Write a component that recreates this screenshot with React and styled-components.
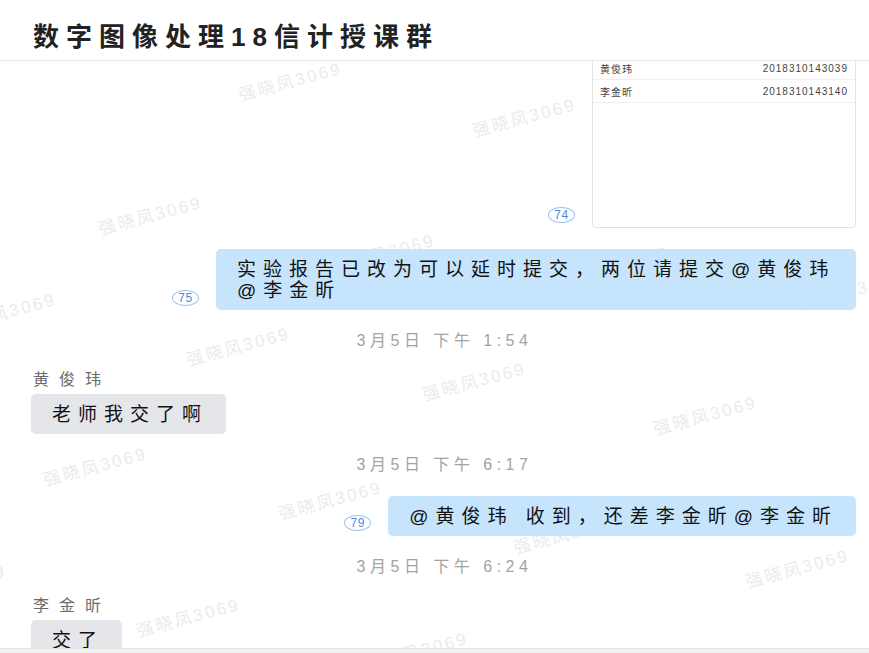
import React from "react";
import styled, { createGlobalStyle } from "styled-components";

const GlobalStyle = createGlobalStyle`
  html, body, #root {
    margin: 0;
    padding: 0;
    height: 100%;
  }
  body {
    background: #fff;
    font-family: "Liberation Sans", "Noto Sans CJK SC", sans-serif;
  }
`;

const Page = styled.div`
  height: 100vh;
  display: flex;
  flex-direction: column;
  overflow: hidden;
`;

/* Header */
const Header = styled.header`
  height: 61px;
  flex-shrink: 0;
  display: flex;
  align-items: center;
  padding: 8px 0 0 33px;
  box-sizing: border-box;
  border-bottom: 1px solid #e6e6e6;
  background: #fff;
  position: relative;
  z-index: 3;
`;

const Title = styled.h1`
  margin: 0;
  font-size: 26px;
  font-weight: 700;
  letter-spacing: 7px;
  color: #222;
`;

/* Chat area */
const ChatArea = styled.main`
  flex: 1;
  position: relative;
  overflow: hidden;
`;

const Watermark = styled.span`
  position: absolute;
  transform: translate(-50%, -50%) rotate(-15deg);
  font-size: 17px;
  letter-spacing: 2.5px;
  color: #ebebeb;
  white-space: nowrap;
  pointer-events: none;
  z-index: 0;
`;

const MessageList = styled.div`
  position: relative;
  z-index: 1;
  margin-top: -5px;
  padding: 0 13px 0 31px;
  display: flex;
  flex-direction: column;
  gap: 21px;
`;

const OutRow = styled.div`
  display: flex;
  justify-content: flex-end;
  align-items: flex-end;
  gap: 17px;
`;

const ReadBadge = styled.span`
  width: 25px;
  height: 14px;
  margin-bottom: ${(p) => p.$lift || 4}px;
  border: 1.5px solid #9dc0ec;
  border-radius: 50%;
  display: flex;
  align-items: center;
  justify-content: center;
  font-size: 12px;
  letter-spacing: 0.5px;
  color: #4f88d3;
  flex-shrink: 0;
`;

const Bubble = styled.div`
  max-width: 640px;
  box-sizing: border-box;
  padding: 10px 18px 9px 21px;
  border-radius: 5px;
  background: ${(p) => (p.$out ? "#c6e4fc" : "#e4e6ea")};
  font-size: 19px;
  line-height: 21px;
  letter-spacing: 7px;
  color: #111;
`;

const TableCard = styled.div`
  width: 264px;
  height: 172px;
  box-sizing: border-box;
  border: 1px solid #e2e2e2;
  border-radius: 4px;
  background: #fff;
  overflow: hidden;
`;

const TableRow = styled.div`
  height: 23px;
  box-sizing: border-box;
  padding: 0 7px;
  display: flex;
  align-items: center;
  justify-content: space-between;
  border-bottom: 1px solid #efefef;
  font-size: 10px;
  letter-spacing: 1px;
  color: #444;
`;

const TimeStamp = styled.div`
  padding-left: 2px;
  text-align: center;
  font-size: 16px;
  line-height: 20px;
  letter-spacing: 4.5px;
  color: #a3a3a3;
`;

const InGroup = styled.div`
  display: flex;
  flex-direction: column;
  align-items: flex-start;
  gap: 6px;
`;

const Sender = styled.div`
  padding-left: 2px;
  font-size: 16px;
  line-height: 16px;
  letter-spacing: 10px;
  color: #6b6b6b;
`;

const Footer = styled.footer`
  height: 4px;
  flex-shrink: 0;
  border-top: 1px solid #e4e4e4;
  background: #f3f3f3;
`;

const marks = [
  [290, 19], [524, 55], [150, 153], [383, 191], [617, 203], [852, 228],
  [4, 250], [238, 284], [474, 319], [705, 353],
  [95, 404], [330, 438], [565, 472], [797, 506],
  [-46, 521], [188, 555], [416, 589],
];

const students = [
  ["黄俊玮", "2018310143039"],
  ["李金昕", "2018310143140"],
];

export default function App() {
  return (
    <Page>
      <GlobalStyle />
      <Header>
        <Title>数字图像处理18信计授课群</Title>
      </Header>
      <ChatArea>
        {marks.map(([x, y], i) => (
          <Watermark key={i} style={{ left: x, top: y }}>
            强晓凤3069
          </Watermark>
        ))}
        <MessageList>
          <OutRow>
            <ReadBadge $lift={5}>74</ReadBadge>
            <TableCard>
              {students.map(([name, id]) => (
                <TableRow key={id}>
                  <span>{name}</span>
                  <span>{id}</span>
                </TableRow>
              ))}
            </TableCard>
          </OutRow>
          <OutRow>
            <ReadBadge>75</ReadBadge>
            <Bubble $out>实验报告已改为可以延时提交，两位请提交@黄俊玮@李金昕</Bubble>
          </OutRow>
          <TimeStamp>3月5日 下午 1:54</TimeStamp>
          <InGroup>
            <Sender>黄俊玮</Sender>
            <Bubble>老师我交了啊</Bubble>
          </InGroup>
          <TimeStamp>3月5日 下午 6:17</TimeStamp>
          <OutRow>
            <ReadBadge $lift={5}>79</ReadBadge>
            <Bubble $out>@黄俊玮 收到，还差李金昕@李金昕</Bubble>
          </OutRow>
          <TimeStamp>3月5日 下午 6:24</TimeStamp>
          <InGroup>
            <Sender>李金昕</Sender>
            <Bubble>交了</Bubble>
          </InGroup>
        </MessageList>
      </ChatArea>
      <Footer />
    </Page>
  );
}
